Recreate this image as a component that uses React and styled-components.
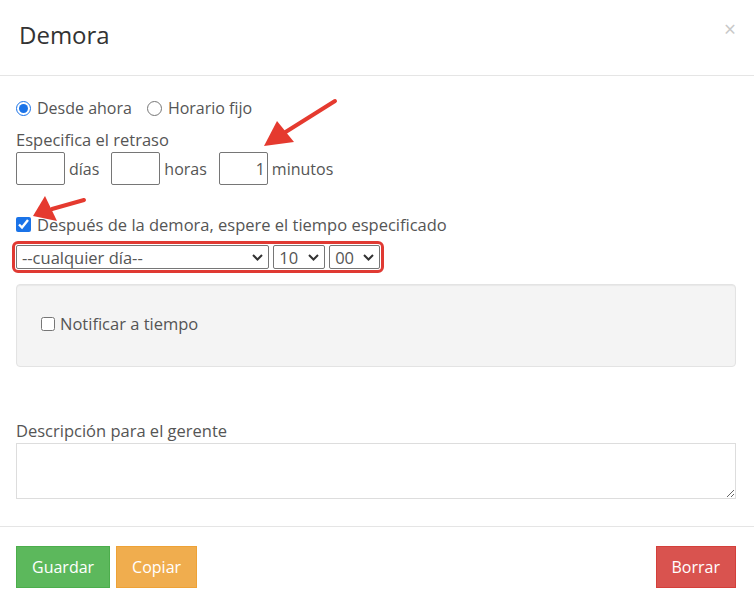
import React from 'react';
import styled, { createGlobalStyle } from 'styled-components';

const GlobalStyle = createGlobalStyle`
    html, body {
        margin: 0;
        padding: 0;
        background: #fff;
    }
    body {
        font-family: 'Open Sans', 'Liberation Sans', sans-serif;
        color: #555;
        font-size: 16.5px;
    }
    * {
        box-sizing: border-box;
    }
`;

const Caret = () => (
    <svg width="11" height="7" viewBox="0 0 11 7">
        <path d="M1 1 L5.5 5.5 L10 1" fill="none" stroke="#333" strokeWidth="2" />
    </svg>
);

const App = () => {
    return (
        <Modal>
            <GlobalStyle />
            <Header>
                <Title>Demora</Title>
                <Close>×</Close>
            </Header>
            <Body>
                <RadioRow>
                    <Choice>
                        <input type="radio" name="mode" defaultChecked />
                        Desde ahora
                    </Choice>
                    <Choice>
                        <input type="radio" name="mode" />
                        Horario fijo
                    </Choice>
                </RadioRow>
                <Label>Especifica el retraso</Label>
                <DelayRow>
                    <NumberInput defaultValue="" />
                    <Unit>días</Unit>
                    <NumberInput defaultValue="" />
                    <Unit>horas</Unit>
                    <NumberInput defaultValue="1" />
                    <Unit tight>minutos</Unit>
                </DelayRow>
                <CheckRow>
                    <input type="checkbox" defaultChecked />
                    Después de la demora, espere el tiempo especificado
                </CheckRow>
                <SelectGroup>
                    <FakeSelect width="254px">
                        <span>--cualquier día--</span>
                        <Caret />
                    </FakeSelect>
                    <FakeSelect width="52px">
                        <span>10</span>
                        <Caret />
                    </FakeSelect>
                    <FakeSelect width="51px">
                        <span>00</span>
                        <Caret />
                    </FakeSelect>
                </SelectGroup>
                <Well>
                    <WellCheck>
                        <input type="checkbox" />
                        Notificar a tiempo
                    </WellCheck>
                </Well>
                <DescLabel>Descripción para el gerente</DescLabel>
                <TextArea />
            </Body>
            <Footer>
                <ButtonGroup>
                    <Button color="#5cb85c" border="#4cae4c">Guardar</Button>
                    <Button color="#f0ad4e" border="#eea236">Copiar</Button>
                </ButtonGroup>
                <Button color="#d9534f" border="#d43f3a">Borrar</Button>
            </Footer>
            <Arrows width="754" height="604" viewBox="0 0 754 604">
                <line x1="335" y1="101" x2="284" y2="133" stroke="#e53a2f" strokeWidth="4" strokeLinecap="round" />
                <polygon points="264,146 277,121 294,142" fill="#e53a2f" />
                <line x1="84" y1="200" x2="52" y2="209" stroke="#e53a2f" strokeWidth="4" strokeLinecap="round" />
                <polygon points="33,216 45,196 57,221" fill="#e53a2f" />
            </Arrows>
        </Modal>
    );
};

const Modal = styled.div`
    position: relative;
    width: 754px;
    height: 604px;
    background: #fff;
    overflow: hidden;
`;

const Header = styled.div`
    display: flex;
    justify-content: space-between;
    align-items: flex-start;
    height: 76px;
    padding: 18px 18px 0 19px;
    border-bottom: 1px solid #e5e5e5;
`;

const Title = styled.h4`
    margin: 0;
    font-size: 24px;
    font-weight: 400;
    color: #333;
    line-height: 34px;
`;

const Close = styled.span`
    font-size: 21px;
    color: #c8c8c8;
    line-height: 16px;
    margin-top: 3px;
`;

const Body = styled.div`
    padding: 20px 18px 0 16px;
    height: 450px;
`;

const RadioRow = styled.div`
    display: flex;
    gap: 15px;
    height: 24px;
    align-items: center;
    font-size: 16px;
`;

const Choice = styled.label`
    display: flex;
    align-items: center;
    gap: 6px;

    input {
        margin: 0;
        width: 15px;
        height: 15px;
        accent-color: #1a73e8;
    }
`;

const Label = styled.div`
    margin-top: 10px;
    line-height: 20px;
`;

const DelayRow = styled.div`
    display: flex;
    align-items: center;
    height: 33px;
    margin-top: 2px;
    font-size: 16px;
`;

const NumberInput = styled.input`
    width: 49px;
    height: 33px;
    border: 1px solid #767676;
    border-radius: 2px;
    text-align: right;
    font: inherit;
    color: #555;
    padding: 0 2px;
`;

const Unit = styled.span`
    margin: 0 ${(p) => (p.tight ? '0' : '12px')} 0 4px;
`;

const CheckRow = styled.label`
    display: flex;
    align-items: center;
    gap: 6px;
    margin-top: 27px;
    height: 24px;

    input {
        margin: 0;
        width: 15px;
        height: 15px;
        accent-color: #1a73e8;
    }
`;

const SelectGroup = styled.div`
    display: flex;
    gap: 4px;
    width: 372px;
    height: 32px;
    margin: 5px 0 0 -4px;
    padding: 1px;
    border: 3px solid #e03a33;
    border-radius: 6px;
`;

const FakeSelect = styled.div`
    display: flex;
    align-items: center;
    justify-content: space-between;
    width: ${(p) => p.width};
    height: 24px;
    padding: 0 5px 0 5px;
    border: 1px solid #767676;
    border-radius: 2px;
    color: #555;
`;

const Well = styled.div`
    display: flex;
    align-items: center;
    height: 83px;
    margin-top: 11px;
    padding: 0 24px 4px;
    background: #f4f4f4;
    border: 1px solid #e3e3e3;
    border-radius: 4px;
    box-shadow: inset 0 1px 1px rgb(0 0 0 / 5%);
`;

const WellCheck = styled.label`
    display: flex;
    align-items: center;
    gap: 5px;

    input {
        margin: 0;
        width: 14px;
        height: 14px;
    }
`;

const DescLabel = styled.div`
    margin-top: 54px;
    line-height: 20px;
`;

const TextArea = styled.textarea`
    display: block;
    width: 720px;
    height: 56px;
    margin-top: 2px;
    border: 1px solid #ddd;
    resize: vertical;
`;

const Footer = styled.div`
    display: flex;
    justify-content: space-between;
    align-items: center;
    border-top: 1px solid #e5e5e5;
    padding: 19px 18px 0 16px;
`;

const ButtonGroup = styled.div`
    display: flex;
    gap: 6px;
`;

const Button = styled.button`
    height: 42px;
    padding: 0 15px;
    background: ${(p) => p.color};
    border: 1px solid ${(p) => p.border};
    color: #fff;
    font-family: inherit;
    font-size: 16px;
`;

const Arrows = styled.svg`
    position: absolute;
    top: 0;
    left: 0;
    pointer-events: none;
`;

export default App;
